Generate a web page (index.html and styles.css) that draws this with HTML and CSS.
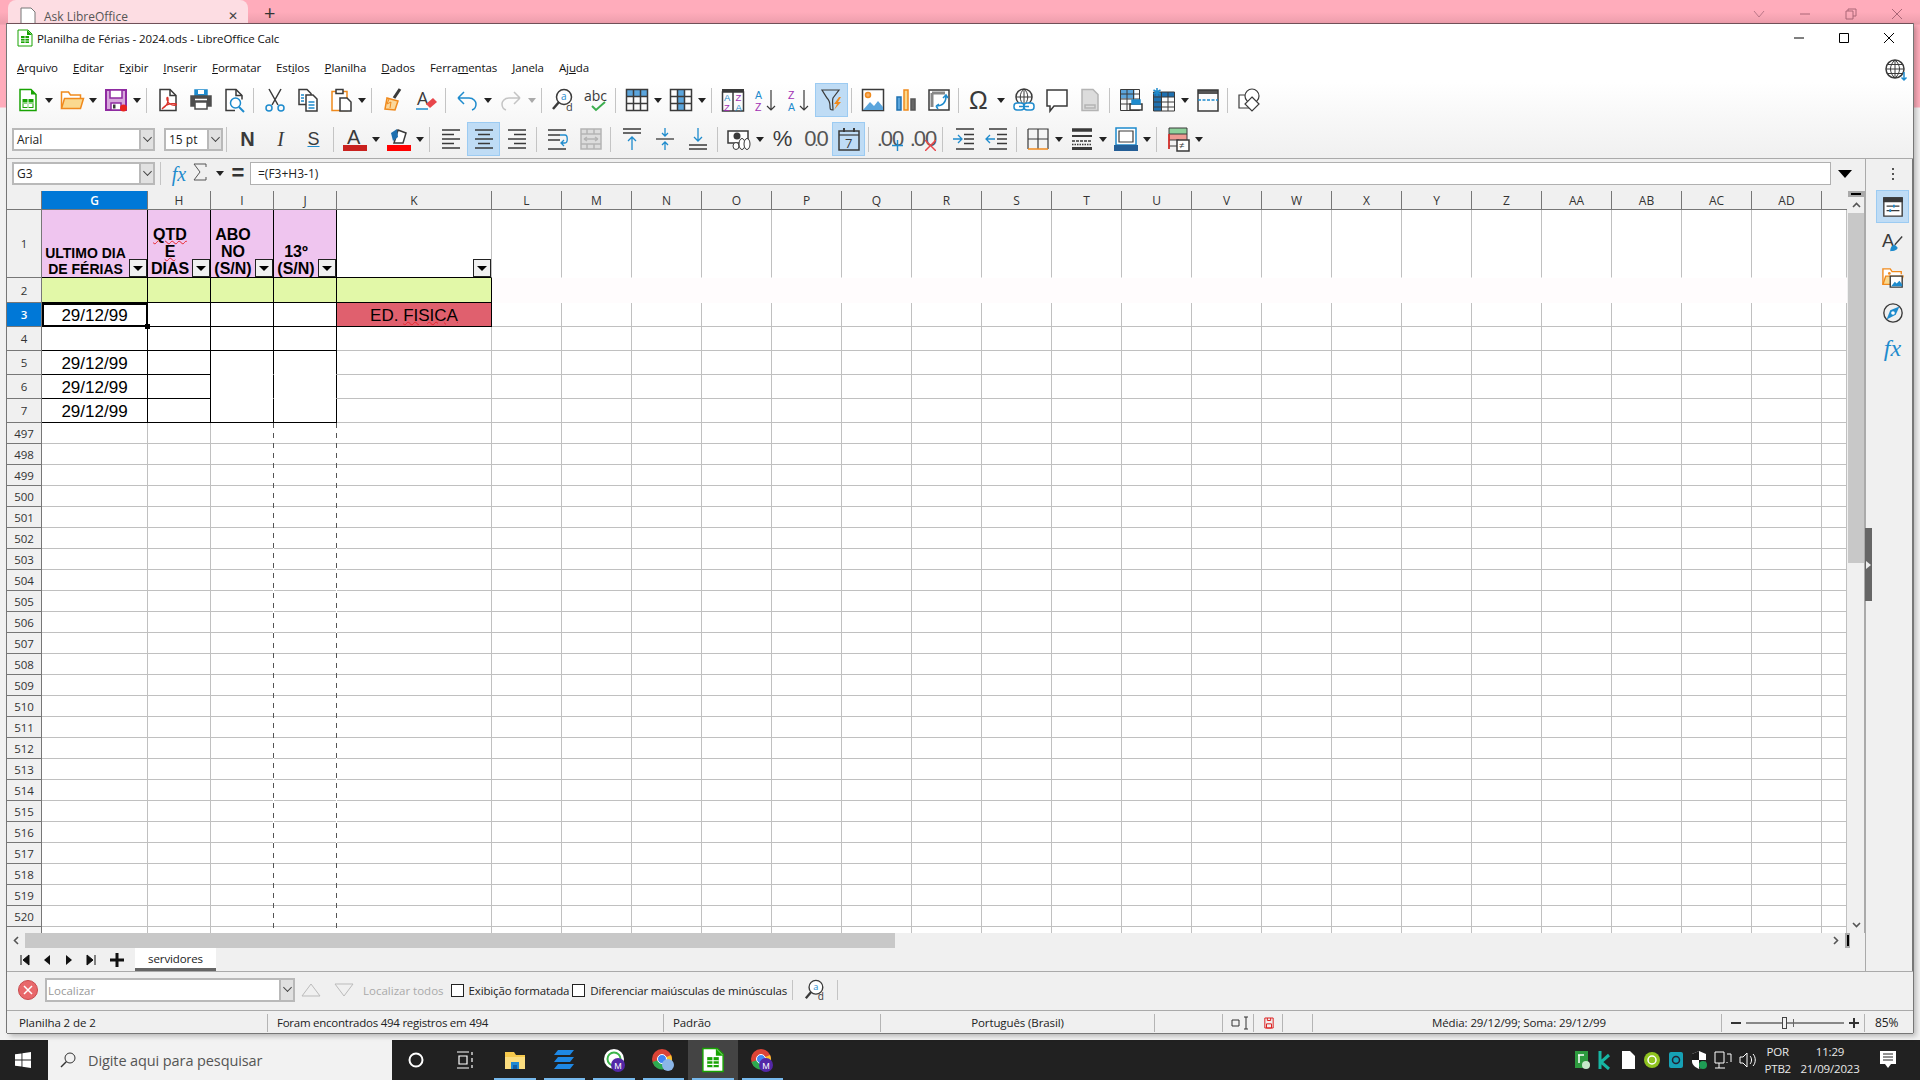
FILE: index.html
```html
<!DOCTYPE html>
<html lang="pt-BR">
<head>
    <meta charset="UTF-8">
    <title>Planilha de Férias - 2024.ods - LibreOffice Calc</title>
    <link rel="stylesheet" href="styles.css">
</head>
<body>
<div class="desktop">
    <div class="backdrop">
        <div class="browser-tab">
            <svg class="tab-doc" width="16" height="18" viewBox="0 0 16 18"><path d="M1 1h10l4 4v12H1z" fill="#fff" stroke="#777"/></svg>
            <span class="tab-title">Ask LibreOffice</span>
            <span class="tab-close">✕</span>
        </div>
        <span class="tab-plus">+</span>
        <div class="browser-controls">
            <svg width="12" height="12" viewBox="0 0 12 12"><path d="M1 3l5 6 5-6" fill="none" stroke="#b78"/></svg>
            <svg width="12" height="12" viewBox="0 0 12 12"><path d="M1 6h10" stroke="#a67"/></svg>
            <svg width="12" height="12" viewBox="0 0 12 12"><path d="M1 3h7v8H1zM3 3V1h8v7H8" fill="none" stroke="#a67"/></svg>
            <svg width="12" height="12" viewBox="0 0 12 12"><path d="M1 1l10 10M11 1L1 11" stroke="#a67"/></svg>
        </div>

        <div class="window">
            <div class="titlebar">
                <svg class="app-icon" width="16" height="18" viewBox="0 0 16 18"><path d="M1 1h10l4 4v12H1z" fill="#fff" stroke="#18a303"/><path d="M10 1l5 5h-5z" fill="#18a303"/><path d="M4 7h8v7H4z" fill="#18a303"/><path d="M4 9.5h8M4 12h8M8 7v7" stroke="#fff" stroke-width=".8"/></svg>
                <span class="title-text">Planilha de Férias - 2024.ods - LibreOffice Calc</span>
                <div class="win-controls">
                    <svg width="12" height="12" viewBox="0 0 12 12"><path d="M1 6h10" stroke="#000"/></svg>
                    <svg width="12" height="12" viewBox="0 0 12 12"><path d="M1.5 1.5h9v9h-9z" fill="none" stroke="#000"/></svg>
                    <svg width="12" height="12" viewBox="0 0 12 12"><path d="M1 1l10 10M11 1L1 11" stroke="#000"/></svg>
                </div>
            </div>

            <div class="toolbox">
                <div class="menubar">
                    <span class="menu"><u>A</u>rquivo</span>
                    <span class="menu"><u>E</u>ditar</span>
                    <span class="menu">E<u>x</u>ibir</span>
                    <span class="menu"><u>I</u>nserir</span>
                    <span class="menu"><u>F</u>ormatar</span>
                    <span class="menu">Est<u>i</u>los</span>
                    <span class="menu"><u>P</u>lanilha</span>
                    <span class="menu"><u>D</u>ados</span>
                    <span class="menu">Ferra<u>m</u>entas</span>
                    <span class="menu"><u>J</u>anela</span>
                    <span class="menu">Aj<u>u</u>da</span>
                    <svg class="ic menu-globe" viewBox="0 0 24 24"><circle cx="11" cy="11" r="9"/><path d="M2 11h18M3 6.5h16M3 15.5h16M11 2v18M11 2c-6 5-6 13 0 18M11 2c6 5 6 13 0 18" stroke-width="1"/><path d="M20 14v8M17.5 19.5l2.5 2.5 2.5-2.5" stroke="#1e8bcd"/></svg>
                </div>

                <div class="toolbar">
                    <button class="tool"><svg class="ic" viewBox="0 0 24 24"><path d="M4 1.5h11l5 5v16H4z" fill="#fff" stroke="#18a303"/><path d="M15 1.5l5 5h-5z" fill="#18a303" stroke="none"/><path d="M6.5 11h11v9h-11z" fill="#18a303" stroke="none"/><path d="M6.5 15h11M12 11v9" stroke="#fff" stroke-width="1"/><path d="M7.5 16h4v3h-4zM12.5 16h4v3h-4z" fill="#fff" stroke="none"/></svg></button>
                    <span class="drop"></span>
                    <button class="tool"><svg class="ic" viewBox="0 0 24 24"><path d="M1.500 20V4h7l2 3h10v4" fill="#fff" stroke="#f08a1d"/><path d="M1.500 20.500l3-10h19l-3 10z" fill="#fad98f" stroke="#f08a1d"/></svg></button>
                    <span class="drop"></span>
                    <button class="tool"><svg class="ic" viewBox="0 0 24 24"><path d="M2 2h20v20H2z" fill="#d7a7dc" stroke="#8f2ba1" stroke-width="2"/><path d="M6 2h12v8H6z" fill="#fff" stroke="#8f2ba1"/><path d="M7 15h10v7H7z" fill="#fff" stroke="#8f2ba1"/><path d="M9 16.500h2.500v4H9z" fill="#3a3a3a" stroke="none"/><circle cx="19.500" cy="20" r="3.500" fill="#e8251f" stroke="none"/></svg></button>
                    <span class="drop"></span>
                    <span class="sep"></span>
                    <button class="tool"><svg class="ic" viewBox="0 0 24 24"><path d="M4 1.500h10l6 6v15H4z" fill="#fff"/><path d="M14 1.500v6h6"/><path d="M6 21c4-2 7-7 6-11-1-2-2 1 0 4s6 4 8 3-3-2-7-1-5 3-7 5z" fill="none" stroke="#d9322b" stroke-width="1.300"/></svg></button>
                    <button class="tool"><svg class="ic" viewBox="0 0 24 24"><path d="M6 2h12v7H6z" fill="#1e8bcd" stroke="#1e8bcd"/><path d="M9 2h6v4H9z" fill="#fff" stroke="none"/><path d="M2 8h20v10H2z" fill="#4d4d4d" stroke="#4d4d4d"/><path d="M6 14h12v7H6z" fill="#fff" stroke="#4d4d4d"/><path d="M6 11.500h12" stroke="#fff" stroke-width="1.500"/></svg></button>
                    <button class="tool"><svg class="ic" viewBox="0 0 24 24"><path d="M13 22.500H4v-21h10l6 6v4" fill="#fff"/><path d="M14 1.500v6h6"/><circle cx="13.500" cy="15" r="5" stroke="#1e8bcd" fill="#fff"/><path d="M17 19l5 5" stroke="#1e8bcd" stroke-width="2"/></svg></button>
                    <span class="sep"></span>
                    <button class="tool"><svg class="ic" viewBox="0 0 24 24"><path d="M6 1l9 16M18 1L9 17" stroke="#3a3a3a"/><circle cx="6" cy="20" r="3" stroke="#1e8bcd"/><circle cx="18" cy="20" r="3" stroke="#1e8bcd"/></svg></button>
                    <button class="tool"><svg class="ic" viewBox="0 0 24 24"><path d="M3 1.500h8l4 4v11H3z" fill="#fff"/><path d="M10 7h7l4 4v12H10z" fill="#fff"/><path d="M12.500 14h6M12.500 17h6M12.500 20h6" stroke="#1e8bcd"/><path d="M5 7h3M5 10h3M5 13h3" stroke="#1e8bcd"/></svg></button>
                    <button class="tool"><svg class="ic" viewBox="0 0 24 24"><path d="M3 3.500h15v19H3z" fill="#fff" stroke="#f08a1d"/><path d="M7 1.500h7v4H7z" fill="#fff"/><path d="M11 10h7l4 4v9H11z" fill="#fff"/></svg></button>
                    <span class="drop"></span>
                    <span class="sep"></span>
                    <button class="tool"><svg class="ic" viewBox="0 0 24 24"><path d="M19 1l-6 9" stroke="#3a3a3a" stroke-width="3"/><path d="M6 10l11 3-3 9-10-1z" fill="#fbd79a" stroke="#f08a1d"/><path d="M8 11l-2 5 4-2-1 6" stroke="#f08a1d" stroke-width="1"/></svg></button>
                    <button class="tool"><svg class="ic" viewBox="0 0 24 24"><text x="3" y="17" font-size="18" fill="#3a3a3a" stroke="none">A</text><path d="M2 21h12" stroke="#1e8bcd"/><path d="M12 16l7-6 4 4-7 6z" fill="#e8464b" stroke="none"/></svg></button>
                    <span class="sep"></span>
                    <button class="tool"><svg class="ic" viewBox="0 0 24 24"><path d="M3 10l6-6M3 10l6 6M3 10h11c5 0 7 4 7 6s-1 5-4 6" stroke="#1e8bcd"/></svg></button>
                    <span class="drop"></span>
                    <button class="tool"><svg class="ic" viewBox="0 0 24 24"><path d="M21 10l-6-6M21 10l-6 6M21 10H10c-5 0-7 4-7 6s1 5 4 6" stroke="#c4c4c4"/></svg></button>
                    <span class="drop off"></span>
                    <span class="sep"></span>
                    <button class="tool"><svg class="ic" viewBox="0 0 24 24"><circle cx="13" cy="9" r="7.500" fill="#fff"/><path d="M8 14l-6 7" stroke-width="2.500"/><text x="10" y="12" font-size="10" fill="#1e8bcd" stroke="none">a</text><text x="15" y="23" font-size="11" fill="#3a3a3a" stroke="none">d</text></svg></button>
                    <button class="tool"><svg class="ic" viewBox="0 0 24 24"><text x="0" y="13" font-size="14" fill="#3a3a3a" stroke="none">abc</text><path d="M8 18l4 4 9-8" stroke="#3cae4f" stroke-width="2"/></svg></button>
                    <span class="sep"></span>
                    <button class="tool"><svg class="ic" viewBox="0 0 24 24"><path d="M1.500 1.500h21v7h-21z" fill="#5ba5dc" stroke="none"/><path d="M1.500 1.500h21v21h-21zM1.500 8.500h21M1.500 15.500h21M8.500 1.500v21M15.500 1.500v21"/></svg></button>
                    <span class="drop"></span>
                    <button class="tool"><svg class="ic" viewBox="0 0 24 24"><path d="M8.500 1.500h7v21h-7z" fill="#5ba5dc" stroke="none"/><path d="M1.500 1.500h21v21h-21zM1.500 8.500h21M1.500 15.500h21M8.500 1.500v21M15.500 1.500v21"/></svg></button>
                    <span class="drop"></span>
                    <span class="sep"></span>
                    <button class="tool"><svg class="ic" viewBox="0 0 24 24"><path d="M1 1h22v3H1z" fill="#3a3a3a" stroke="none"/><path d="M1.500 4h21v19h-21zM12 4v19"/><g font-size="9.500" stroke="none" font-family="Liberation Sans"><text x="3" y="13" fill="#1e8bcd">A</text><text x="3" y="22.500" fill="#a12fb3">Z</text><text x="14.500" y="13" fill="#a12fb3">Z</text><text x="14.500" y="22.500" fill="#1e8bcd">A</text></g></svg></button>
                    <button class="tool"><svg class="ic" viewBox="0 0 24 24"><g font-size="10.500" stroke="none" font-family="Liberation Sans"><text x="1" y="11" fill="#1e8bcd">A</text><text x="1" y="23" fill="#a12fb3">Z</text></g><path d="M17 2v20M13 18l4 4 4-4" stroke-width="1.200"/></svg></button>
                    <button class="tool"><svg class="ic" viewBox="0 0 24 24"><g font-size="10.500" stroke="none" font-family="Liberation Sans"><text x="1" y="11" fill="#a12fb3">Z</text><text x="1" y="23" fill="#1e8bcd">A</text></g><path d="M17 2v20M13 18l4 4 4-4" stroke-width="1.200"/></svg></button>
                    <button class="tool on"><svg class="ic" viewBox="0 0 24 24"><path d="M2 2h17l-6 8c-1 3 0 8 0 12-3 0-3-1-3-4 0-3-1-6-3-8z" stroke-width="1.200"/><path d="M19 9l-5 7h3l-3 6 7-8h-3l3-5z" fill="#f08a1d" stroke="none"/></svg></button>
                    <span class="sep"></span>
                    <button class="tool"><svg class="ic" viewBox="0 0 24 24"><path d="M1.500 1.500h21v21h-21z" fill="#fff"/><path d="M2 22l7-8 4 4 4-5 5 6v3z" fill="#5ba5dc" stroke="none"/><circle cx="7" cy="7" r="2.500" fill="#f6b26b" stroke="#f08a1d"/></svg></button>
                    <button class="tool"><svg class="ic" viewBox="0 0 24 24"><path d="M3 9h4v13H3z" fill="#5ba5dc" stroke="#1e70b0"/><path d="M10 2h4v20h-4z" fill="#fbd98c" stroke="#f08a1d"/><path d="M17 11h4v11h-4z" fill="#666" stroke="#555"/></svg></button>
                    <button class="tool"><svg class="ic" viewBox="0 0 24 24"><path d="M2 2h20v20H2z" fill="#fff"/><path d="M5 5h13M5 5v14" stroke="#888" stroke-width="3"/><path d="M9 18c6 0 10-3 10-10M16 10l3-3 2 3M9 18l3-2M9 18l2 3" stroke="#1e8bcd"/></svg></button>
                    <span class="sep"></span>
                    <button class="tool"><svg class="ic" viewBox="0 0 24 24"><text x="1" y="21" font-size="25" fill="#3a3a3a" stroke="none" font-family="Liberation Sans">Ω</text></svg></button>
                    <span class="drop"></span>
                    <button class="tool"><svg class="ic" viewBox="0 0 24 24"><circle cx="12" cy="9" r="8"/><path d="M4 9h16M12 1v16M12 1c-5 4-5 12 0 16M12 1c5 4 5 12 0 16" stroke-width="1"/><rect x="2" y="15" width="10" height="7" rx="3" fill="#fff" stroke="#1e8bcd"/><rect x="12" y="15" width="10" height="7" rx="3" fill="#fff" stroke="#1e8bcd"/><path d="M7 18.500h10" stroke="#1e8bcd"/></svg></button>
                    <button class="tool"><svg class="ic" viewBox="0 0 24 24"><path d="M2 2h20v16H9l-4 5v-5H2z" fill="#fff"/></svg></button>
                    <button class="tool"><svg class="ic" viewBox="0 0 24 24"><path d="M4 1.500h11l5 5v16H4z" fill="#dcdcdc" stroke="#b4b4b4"/><path d="M7 17h10v3H7z" stroke="#b4b4b4"/></svg></button>
                    <span class="sep"></span>
                    <button class="tool"><svg class="ic" viewBox="0 0 24 24"><path d="M1.500 1.500h14v9h-14z" fill="#5ba5dc" stroke="none"/><path d="M1.500 1.500h19v21h-19zM1.500 6h19M1.500 11h19M1.500 16h19M8 1.500v21M14.500 1.500v21" stroke-width="1"/><path d="M11 16h12v6H11z" fill="#fff"/><path d="M13 12h8v4h-8z" fill="#1e8bcd" stroke="#1e8bcd"/></svg></button>
                    <button class="tool"><svg class="ic" viewBox="0 0 24 24"><path d="M1.500 4h8v19h-8zM9.500 4h13v5h-13z" fill="#1e70b0" stroke="none"/><path d="M1.500 4h21v19h-21zM1.500 9h21M1.500 14h21M1.500 19h21M9.500 4v19M16 4v19" stroke-width="1"/><path d="M5 0v8M1.500 2l7 4M8.500 2l-7 4" stroke="#1e8bcd"/></svg></button>
                    <span class="drop"></span>
                    <button class="tool"><svg class="ic" viewBox="0 0 24 24"><path d="M2 2h20v4H2z" fill="#555" stroke="none"/><path d="M2 2h20v21H2z"/><path d="M2 12h20" stroke="#1e8bcd" stroke-dasharray="3 1.500"/></svg></button>
                    <span class="sep"></span>
                    <button class="tool"><svg class="ic" viewBox="0 0 24 24"><path d="M2 7h10v13H2z" fill="#fff" stroke-width="1.200"/><circle cx="15" cy="8" r="7" fill="#fff" stroke-width="1.200"/><path d="M15 9l7 7-7 7-7-7z" fill="#fff" stroke-width="1.200"/></svg></button>
                </div>

                <div class="toolbar second">
                    <div class="combo font-box"><span>Arial</span><i class="combo-btn"></i></div>
                    <div class="combo size-box"><span>15 pt</span><i class="combo-btn"></i></div>
                    <span class="sep"></span>
                    <button class="tool"><span class="fmt bold">N</span></button>
                    <button class="tool"><span class="fmt ital">I</span></button>
                    <button class="tool"><span class="fmt und">S</span></button>
                    <span class="sep"></span>
                    <button class="tool"><svg class="ic" viewBox="0 0 24 24"><text x="4" y="17" font-size="20" fill="#3a3a3a" stroke="none" font-family="Liberation Sans">A</text><path d="M0 18h24v6H0z" fill="#c9211e" stroke="none"/></svg></button>
                    <span class="drop"></span>
                    <button class="tool"><svg class="ic" viewBox="0 0 24 24"><path d="M11 3l8 3-3 10H7z" fill="#fff"/><path d="M4 6l6-4 1 8-5 4z" fill="#1e70b0" stroke="none"/><path d="M0 18h24v6H0z" fill="#f00" stroke="none"/></svg></button>
                    <span class="drop"></span>
                    <span class="sep"></span>
                    <button class="tool"><svg class="ic lines" viewBox="0 0 24 24"><path d="M3 3h18M3 7.500h12M3 12h18M3 16.500h12M3 21h18"/></svg></button>
                    <button class="tool on"><svg class="ic lines" viewBox="0 0 24 24"><path d="M3 3h18M6 7.500h12M3 12h18M6 16.500h12M3 21h18"/></svg></button>
                    <button class="tool"><svg class="ic lines" viewBox="0 0 24 24"><path d="M3 3h18M9 7.500h12M3 12h18M9 16.500h12M3 21h18"/></svg></button>
                    <span class="sep"></span>
                    <button class="tool"><svg class="ic lines" viewBox="0 0 24 24"><path d="M2 3h18M2 8h12M2 13h12M2 22h18"/><path d="M14 8h5c3 0 3 8 0 8h-3M18 13l-3 3 3 3" stroke="#1e8bcd" stroke-width="1.300"/></svg></button>
                    <button class="tool"><svg class="ic" viewBox="0 0 24 24"><path d="M2 2h20v20H2z" fill="#dcdcdc" stroke="#b4b4b4"/><path d="M2 7h20M2 17h20M8 2v5M15 2v5M8 17v5M15 17v5M5 12h14M5 12l3-2M5 12l3 2M19 12l-3-2M19 12l-3 2" stroke="#b4b4b4"/></svg></button>
                    <span class="sep"></span>
                    <button class="tool"><svg class="ic lines" viewBox="0 0 24 24"><path d="M3 2h18M3 6h18"/><path d="M12 23V10M8 14l4-4 4 4" stroke="#1e8bcd"/></svg></button>
                    <button class="tool"><svg class="ic lines" viewBox="0 0 24 24"><path d="M3 12h18"/><path d="M12 1v8M9 6l3 3 3-3M12 23v-8M9 18l3-3 3 3" stroke="#1e8bcd"/></svg></button>
                    <button class="tool"><svg class="ic lines" viewBox="0 0 24 24"><path d="M3 22h18M3 18h18"/><path d="M12 1v13M8 10l4 4 4-4" stroke="#1e8bcd"/></svg></button>
                    <span class="sep"></span>
                    <button class="tool"><svg class="ic" viewBox="0 0 24 24"><path d="M1 4h20v12H1z" fill="#fff"/><circle cx="10" cy="9" r="3.500" fill="#3a3a3a" stroke="none"/><g fill="#fff" stroke-width="1"><ellipse cx="9" cy="19" rx="3" ry="3.500"/><ellipse cx="15" cy="17" rx="3" ry="5.500"/><ellipse cx="20" cy="17" rx="3" ry="5.500"/></g></svg></button>
                    <span class="drop"></span>
                    <button class="tool"><span class="fmt pct">%</span></button>
                    <button class="tool"><span class="fmt num">0<small>.</small>0</span></button>
                    <button class="tool on"><svg class="ic" viewBox="0 0 24 24"><path d="M2 4h20v19H2z"/><path d="M2 8h20" stroke-width="1.200"/><path d="M7 1v4M17 1v4" stroke-width="2"/><text x="8" y="21" font-size="13" fill="#3a3a3a" stroke="none">7</text></svg></button>
                    <span class="sep"></span>
                    <button class="tool"><span class="fmt num">.0<span class="num-over">0</span></span><svg class="mark" viewBox="0 0 10 10"><path d="M5 0v10M0 5h10" stroke="#1e8bcd" stroke-width="1.300"/></svg></button>
                    <button class="tool"><span class="fmt num">.0<span class="num-over">0</span></span><svg class="mark" viewBox="0 0 10 10"><path d="M0 0l10 10M10 0L0 10" stroke="#e8464b" stroke-width="1.300"/></svg></button>
                    <span class="sep"></span>
                    <button class="tool"><svg class="ic lines" viewBox="0 0 24 24"><path d="M4 2h18M12 7.500h10M12 12h10M12 16.500h10M4 22h18"/><path d="M1 12h9M6 8l4 4-4 4" stroke="#1e8bcd"/></svg></button>
                    <button class="tool"><svg class="ic lines" viewBox="0 0 24 24"><path d="M4 2h18M12 7.500h10M12 12h10M12 16.500h10M4 22h18"/><path d="M10 12H1M5 8l-4 4 4 4" stroke="#1e8bcd"/></svg></button>
                    <span class="sep"></span>
                    <button class="tool"><svg class="ic" viewBox="0 0 24 24"><path d="M2 2h20v20M2 2v20M2 12h20M12 2v20" stroke-width="1.200"/><path d="M2 22h20" stroke="#f08a1d" stroke-width="1.500"/></svg></button>
                    <span class="drop"></span>
                    <button class="tool"><svg class="ic" viewBox="0 0 24 24"><path d="M2 3h20" stroke-width="3.500"/><path d="M2 9h20" stroke-width="2"/><path d="M2 14h20" stroke-dasharray="3 1"/><path d="M2 17.500h20" stroke-dasharray="1.500 1"/><path d="M2 21.500h20" stroke-width="3"/></svg></button>
                    <span class="drop"></span>
                    <button class="tool"><svg class="ic" viewBox="0 0 24 24"><path d="M2 1h20v17H2z" stroke="#1e8bcd" fill="#fff"/><path d="M5 4h14v11H5z" stroke-width="1.200"/><path d="M0 18h24v6H0z" fill="#245e96" stroke="none"/></svg></button>
                    <span class="drop"></span>
                    <span class="sep"></span>
                    <button class="tool"><svg class="ic" viewBox="0 0 24 24"><path d="M3 1h18v6H3z" fill="#8ed19b" stroke="none"/><path d="M3 7h18v6H3z" fill="#f09a93" stroke="none"/><path d="M3 1h18M3 1v21M21 1v12M3 7h18M3 13h10M3 19h8" stroke-width="1"/><path d="M3 7v15" stroke="#e8251f"/><path d="M11 13h12v11H11z" fill="#fff"/><text x="13" y="22" font-size="10" fill="#3a3a3a" stroke="none">≠</text></svg></button>
                    <span class="drop"></span>
                </div>
            </div>

            <div class="workspace">
                <div class="main-col">
                    <div class="formula-row">
                        <div class="combo name-box"><span>G3</span><i class="combo-btn"></i></div>
                        <span class="sep"></span>
                        <span class="fx">fx</span>
                        <svg class="sigma" viewBox="0 0 14 18"><path d="M13 4V1H1l6 8-6 8h12v-3" fill="none" stroke="#555"/></svg>
                        <span class="drop"></span>
                        <span class="equal">=</span>
                        <div class="formula-input">=(F3+H3-1)</div>
                        <span class="formula-more"></span>
                    </div>

                    <div class="sheet-row">
                        <div class="sheet">
                            <table class="grid" id="grid"></table>
                            <span class="page-break pb-i"></span>
                            <span class="page-break pb-j"></span>
                        </div>
                        <div class="vscroll">
                            <span class="split-v"></span>
                            <span class="sb-btn"><svg width="9" height="6" viewBox="0 0 9 6"><path d="M1 5l3.500-3.500L8 5" fill="none" stroke="#555" stroke-width="1.600"/></svg></span>
                            <span class="thumb-v"></span>
                            <span class="track-v"></span>
                            <span class="sb-btn"><svg width="9" height="6" viewBox="0 0 9 6"><path d="M1 1l3.500 3.500L8 1" fill="none" stroke="#555" stroke-width="1.600"/></svg></span>
                        </div>
                    </div>

                    <div class="hscroll">
                        <span class="sb-btn-h"><svg width="6" height="9" viewBox="0 0 6 9"><path d="M5 1L1.500 4.500 5 8" fill="none" stroke="#555" stroke-width="1.600"/></svg></span>
                        <span class="thumb-h"></span>
                        <span class="track-h"></span>
                        <span class="sb-btn-h"><svg width="6" height="9" viewBox="0 0 6 9"><path d="M1 1l3.500 3.500L1 8" fill="none" stroke="#555" stroke-width="1.600"/></svg></span>
                        <span class="split-h"></span>
                    </div>

                    <div class="tabbar">
                        <svg class="nav-ic" viewBox="0 0 12 12"><path d="M2 1v10M10 1v10L4 6z" stroke="#111" fill="#111"/></svg>
                        <svg class="nav-ic" viewBox="0 0 12 12"><path d="M9 1v10L3 6z" fill="#111"/></svg>
                        <svg class="nav-ic" viewBox="0 0 12 12"><path d="M3 1v10l6-5z" fill="#111"/></svg>
                        <svg class="nav-ic" viewBox="0 0 12 12"><path d="M10 1v10M2 1v10l6-5z" stroke="#111" fill="#111"/></svg>
                        <svg class="nav-ic plus" viewBox="0 0 14 14"><path d="M7 0v14M0 7h14" stroke="#111" stroke-width="3"/></svg>
                        <span class="sheet-tab">servidores</span>
                    </div>
                </div>

                <div class="sidebar">
                    <span class="side-dots"></span>
                    <button class="side-btn on"><svg class="ic side-ic" viewBox="0 0 24 24"><path d="M2 2h20v20H2z" fill="#fff"/><path d="M2 2h20v4H2z" fill="#3a3a3a"/><path d="M5 11h14M5 16h14"/><path d="M13 9.500v3M9 14.500v3" stroke="#1e8bcd" stroke-width="2"/></svg></button>
                    <button class="side-btn"><svg class="ic side-ic" viewBox="0 0 24 24"><text x="0" y="17" font-size="20" fill="#3a3a3a" stroke="none" font-family="Liberation Sans">A</text><path d="M22 6l-8 9" stroke="#3a3a3a" stroke-width="1.500"/><path d="M9 22c0-4 2-7 5-7l3 3c0 3-4 4-8 4z" fill="#1e8bcd" stroke="none"/></svg></button>
                    <button class="side-btn"><svg class="ic side-ic" viewBox="0 0 24 24"><path d="M1 19V2h8l2 3h10v3" fill="#fff" stroke="#f08a1d"/><path d="M1 19l3-9h19l-3 9z" fill="#fad98f" stroke="#f08a1d"/><path d="M9 10h13v12H9z" fill="#fff" stroke="#3a3a3a"/><path d="M10 21l4-5 2 2 3-3 3 4v2z" fill="#1e8bcd" stroke="none"/><circle cx="8" cy="7" r="1.500" fill="#f08a1d" stroke="none"/></svg></button>
                    <button class="side-btn"><svg class="ic side-ic" viewBox="0 0 24 24"><circle cx="12" cy="12" r="10"/><path d="M19 5l-4 9-10 5 4-10z" fill="#1e8bcd" stroke="none"/><circle cx="12" cy="12" r="2" fill="#fff" stroke="none"/></svg></button>
                    <button class="side-btn"><span class="side-fx">fx</span></button>
                    <span class="side-grip"><svg width="5" height="8" viewBox="0 0 5 8"><path d="M0 0l5 4-5 4z" fill="#eee"/></svg></span>
                </div>
            </div>

            <div class="findbar">
                <svg class="find-close" viewBox="0 0 20 20"><circle cx="10" cy="10" r="9.500" fill="#e8686b" stroke="#c84a4d"/><path d="M6 6l8 8M14 6l-8 8" stroke="#fff" stroke-width="1.500"/></svg>
                <div class="combo find-box"><span>Localizar</span><i class="combo-btn"></i></div>
                <svg class="find-arrow up" viewBox="0 0 20 14"><path d="M1 13L10 1l9 12z" fill="none" stroke="#bbb"/></svg>
                <svg class="find-arrow down" viewBox="0 0 20 14"><path d="M1 1l9 12 9-12z" fill="none" stroke="#bbb"/></svg>
                <span class="find-all">Localizar todos</span>
                <span class="check"></span><span class="check-label one">Exibição formatada</span>
                <span class="check"></span><span class="check-label">Diferenciar maiúsculas de minúsculas</span>
                <span class="find-sep"></span>
                <svg class="ic find-ic" viewBox="0 0 24 24"><circle cx="13" cy="9" r="7.500" fill="#fff"/><path d="M8 14l-6 7" stroke-width="2.500"/><text x="10" y="12" font-size="10" fill="#1e8bcd" stroke="none">a</text><text x="15" y="23" font-size="11" fill="#3a3a3a" stroke="none">d</text></svg>
                <span class="find-sep"></span>
            </div>

            <div class="statusbar">
                <span class="st st-sheet">Planilha 2 de 2</span>
                <span class="st st-found">Foram encontrados 494 registros em 494</span>
                <span class="st st-style">Padrão</span>
                <span class="st st-lang">Português (Brasil)</span>
                <span class="st st-blank"></span>
                <span class="st st-ins"><svg width="20" height="14" viewBox="0 0 20 14"><path d="M2 4h7v6H2z" fill="none" stroke="#333"/><path d="M14 1h4M16 1v12M14 13h4" stroke="#333"/></svg></span>
                <span class="st st-save"><svg width="10" height="14" viewBox="0 0 12 14"><path d="M1 1h10v12H1zM4 1v3h4V1M3 8h6v5H3z" fill="none" stroke="#d22" stroke-width="1.200"/></svg></span>
                <span class="st st-sign"></span>
                <span class="st st-sum">Média: 29/12/99; Soma: 29/12/99</span>
                <span class="st st-zoom">
                    <svg width="10" height="10" viewBox="0 0 10 10"><path d="M0 5h10" stroke="#333" stroke-width="2"/></svg>
                    <span class="zoom-track"><i class="zoom-tick"></i><i class="zoom-thumb"></i></span>
                    <svg width="10" height="10" viewBox="0 0 10 10"><path d="M0 5h10M5 0v10" stroke="#333" stroke-width="2"/></svg>
                </span>
                <span class="st st-pct">85%</span>
            </div>
        </div>
    </div>

    <div class="taskbar">
        <svg class="start" width="16" height="16" viewBox="0 0 16 16"><path d="M0 2.300l6.500-.9v6.200H0zM7.400 1.300L16 0v7.600H7.400zM0 8.400h6.500v6.200L0 13.700zM7.400 8.400H16V16l-8.600-1.300z" fill="#fff"/></svg>
        <div class="search">
            <svg width="16" height="16" viewBox="0 0 16 16"><circle cx="10" cy="6" r="5" fill="none" stroke="#333"/><path d="M6.500 9.500L1 15" stroke="#333" stroke-width="1.400"/></svg>
            <span>Digite aqui para pesquisar</span>
        </div>
        <div class="task-icons">
            <span class="task"><svg width="16" height="16" viewBox="0 0 16 16"><circle cx="8" cy="8" r="6.500" fill="none" stroke="#fff" stroke-width="2"/></svg></span>
            <span class="task"><svg width="18" height="18" viewBox="0 0 18 18"><path d="M1 1h12M1 17h12M3 5h8v8H3zM16 1v3M16 7v4M16 14v3" fill="none" stroke="#fff" stroke-width="1.200"/></svg></span>
            <span class="task open"><svg width="24" height="24" viewBox="0 0 24 24"><path d="M2 4h9l2 3h9v14H2z" fill="#f6c94c"/><path d="M2 9h20v12H2z" fill="#fbdd7f"/><path d="M8 14h8v7h-2v-4h-4v4H8z" fill="#1e88d2"/><path d="M10 17h4v4h-4z" fill="#0f5ea8"/></svg></span>
            <span class="task open"><svg width="24" height="24" viewBox="0 0 24 24"><path d="M6 2h16l-4 5H2zM6 9h16l-4 5H2zM6 16h16l-4 5H2z" fill="#1e88e5"/></svg></span>
            <span class="task open"><svg width="24" height="24" viewBox="0 0 24 24"><circle cx="12" cy="11" r="10" fill="#fff"/><circle cx="12" cy="11" r="6.500" fill="none" stroke="#3cb54a" stroke-width="2"/><circle cx="16" cy="17" r="7" fill="#5327a6"/><text x="16" y="20.500" font-size="9" fill="#fff" text-anchor="middle" font-family="Liberation Sans">M</text></svg></span>
            <span class="task open"><svg width="24" height="24" viewBox="0 0 24 24"><circle cx="11" cy="11" r="10" fill="#db4437"/><path d="M11 11L1.500 14A10 10 0 0 0 14 21z" fill="#2da94f"/><path d="M11 11l3 10a10 10 0 0 0 6-14z" fill="#fbc02d"/><circle cx="11" cy="11" r="4.500" fill="#4285f4" stroke="#fff"/><circle cx="17" cy="17" r="6" fill="#8bb6e8"/></svg></span>
            <span class="task active"><svg width="24" height="26" viewBox="0 0 16 18"><path d="M1 1h10l4 4v12H1z" fill="#fff" stroke="#18a303"/><path d="M10 1l5 5h-5z" fill="#18a303"/><path d="M4 7h8v7H4z" fill="#18a303"/><path d="M4 9.500h8M4 12h8M8 7v7" stroke="#fff" stroke-width=".8"/></svg></span>
            <span class="task open"><svg width="24" height="24" viewBox="0 0 24 24"><circle cx="11" cy="11" r="10" fill="#db4437"/><path d="M11 11L1.500 14A10 10 0 0 0 14 21z" fill="#2da94f"/><path d="M11 11l3 10a10 10 0 0 0 6-14z" fill="#fbc02d"/><circle cx="11" cy="11" r="4.500" fill="#4285f4" stroke="#fff"/><circle cx="16" cy="17" r="7" fill="#5327a6"/><text x="16" y="20.500" font-size="9" fill="#fff" text-anchor="middle" font-family="Liberation Sans">M</text></svg></span>
        </div>
        <div class="tray">
            <svg width="16" height="20" viewBox="0 0 16 20"><path d="M1 1h13v17H1z" fill="#2e9b3f"/><path d="M4 5h6M5 5v8" stroke="#fff" stroke-width="1.500"/><circle cx="12" cy="15" r="4" fill="#c7e8c9"/></svg>
            <svg width="16" height="20" viewBox="0 0 16 20"><path d="M3 1v18M12 5l-8 7 8 7" fill="none" stroke="#17b6a3" stroke-width="3"/></svg>
            <svg width="16" height="20" viewBox="0 0 16 20"><path d="M2 1h8l5 5v13H2z" fill="#fff"/></svg>
            <svg width="18" height="18" viewBox="0 0 18 18"><circle cx="9" cy="9" r="8" fill="#8fc31f"/><circle cx="9" cy="9" r="4" fill="none" stroke="#fff" stroke-width="1.500"/></svg>
            <svg width="16" height="20" viewBox="0 0 16 20"><rect x="1" y="2" width="14" height="16" rx="2" fill="#16a1b5"/><circle cx="8" cy="10" r="3.500" fill="none" stroke="#223" stroke-width="1.500"/></svg>
            <svg width="16" height="20" viewBox="0 0 16 20"><path d="M8 1l7 3v7c0 4-3 6-7 8-4-2-7-4-7-8V4z" fill="#fff"/><path d="M8 1v9H1V4zM8 10h7c0 4-3 7-7 9z" fill="#1c1c1c"/><circle cx="12" cy="15" r="4" fill="#1f9d55"/></svg>
            <svg width="18" height="20" viewBox="0 0 18 20"><path d="M1 2h9v11H1zM13 4h4v8M5 13v5M1 18h10M13 13v-1" fill="none" stroke="#fff"/></svg>
            <svg width="18" height="18" viewBox="0 0 18 18"><path d="M1 6h3l4-4v14l-4-4H1zM11 5c2 2 2 6 0 8M14 3c3 3 3 9 0 12" fill="none" stroke="#fff"/></svg>
            <div class="tray-lang"><span>POR</span><span>PTB2</span></div>
            <div class="tray-clock"><span>11:29</span><span>21/09/2023</span></div>
            <svg class="notify" width="16" height="20" viewBox="0 0 16 20"><path d="M0 1h16v13h-5l-3 4-3-4H0z" fill="#fff"/><path d="M3 4h10M3 7h10M3 10h10" stroke="#222"/></svg>
        </div>
    </div>
</div>
<script src="sheet.js"></script>
</body>
</html>
```

FILE: styles.css
```css
* {
    box-sizing: border-box;
}
body {
    margin: 0;
    font-family: "Open Sans", "Noto Sans", sans-serif;
    font-size: 11.5px;
    color: #222;
}
button {
    padding: 0;
    border: 1px solid transparent;
    background: none;
    font: inherit;
    color: inherit;
}
.desktop {
    width: 1920px;
    height: 1080px;
    display: flex;
    flex-direction: column;
    overflow: hidden;
}
.backdrop {
    position: relative;
    height: 1040px;
    padding: 23px 0 0 7px;
    background: linear-gradient(#ffacbb 0, #ffacbb 12px, #ec9dab 24px, #ffacbb 25px, #ffacbb 107px, #f2f2f2 108px);
}
.browser-tab {
    position: absolute;
    left: 8px;
    top: 0;
    width: 240px;
    height: 30px;
    padding-left: 12px;
    display: flex;
    background: #fddde3;
    border-radius: 8px 8px 0 0;
    font-size: 12px;
    color: #555;
}
.tab-doc {
    margin-top: 7px;
}
.tab-title {
    margin: 8px 0 0 8px;
}
.tab-close {
    margin: 7px 0 0 auto;
    padding-right: 10px;
    color: #444;
}
.tab-plus {
    position: absolute;
    left: 264px;
    top: 3px;
    font-size: 20px;
    line-height: 20px;
    color: #333;
}
.browser-controls {
    position: absolute;
    right: 17px;
    top: 8px;
    display: flex;
    gap: 34px;
}

/* window */
.window {
    width: 1906px;
    height: 1010px;
    display: flex;
    flex-direction: column;
    background: #f0f0f0;
    border-top: 1px solid #705058;
    box-shadow: 1px 0 0 #777, -1px 0 0 #777, 0 1px 0 #777, 3px 3px 5px rgba(0, 0, 0, 0.25);
    position: relative;
}
.titlebar {
    height: 28px;
    display: flex;
    align-items: center;
    padding-left: 10px;
    background: #fff;
    flex-shrink: 0;
}
.app-icon {
    margin-right: 4px;
}
.title-text {
    font-size: 11.5px;
    letter-spacing: -0.07px;
    color: #111;
}
.win-controls {
    margin-left: auto;
    display: flex;
    gap: 33px;
    padding-right: 18px;
}
.toolbox {
    height: 107px;
    flex-shrink: 0;
    background: linear-gradient(#fff 0, #fff 30px, #f0f0f0 100%);
    border-bottom: 1px solid #aaa;
}
.menubar {
    height: 31px;
    display: flex;
    align-items: center;
    padding-left: 10px;
    gap: 15px;
    font-size: 11.5px;
    letter-spacing: -0.1px;
    color: #111;
    position: relative;
}
.menu-globe {
    position: absolute;
    right: 5px;
    top: 6px;
    width: 18px;
    height: 18px;
}
.toolbar {
    height: 34px;
    padding-left: 4px;
    display: flex;
    align-items: center;
}
.second {
    margin-top: 5px;
    padding-left: 5px;
}
.tool {
    width: 33px;
    height: 34px;
    flex-shrink: 0;
    display: flex;
    align-items: center;
    justify-content: center;
    position: relative;
}
.tool.on, .side-btn.on {
    background: #bfdcf5;
    border-color: #9ccbf2;
}
.ic {
    width: 24px;
    height: 24px;
    fill: none;
    stroke: #3a3a3a;
    stroke-width: 1.5;
    font-family: "Open Sans", sans-serif;
    overflow: visible;
}
.drop {
    width: 11px;
    height: 16px;
    flex-shrink: 0;
    position: relative;
}
.drop::after {
    content: "";
    position: absolute;
    left: 1px;
    top: 6px;
    border: 4px solid transparent;
    border-top: 5px solid #222;
    border-bottom: 0;
}
.drop.off::after {
    border-top-color: #aaa;
}
.sep {
    width: 8px;
    height: 25px;
    flex-shrink: 0;
    position: relative;
}
.sep::after {
    content: "";
    position: absolute;
    left: 3px;
    top: 0;
    width: 1px;
    height: 100%;
    background: #c4c4c4;
}
.combo {
    height: 23px;
    display: flex;
    align-items: center;
    padding-left: 3px;
    background: #fff;
    border: 2px solid #b9b9b9;
    border-right: 0;
    font-size: 12px;
    color: #222;
    position: relative;
    flex-shrink: 0;
}
.combo-btn {
    position: absolute;
    right: 0;
    top: -2px;
    bottom: -2px;
    width: 16px;
    background: #e1e1e1;
    border: 2px solid #b9b9b9;
}
.combo-btn::after {
    content: "";
    position: absolute;
    left: 3px;
    top: 4px;
    width: 6px;
    height: 6px;
    border-right: 1px solid #444;
    border-bottom: 1px solid #444;
    transform: rotate(45deg) scale(0.9);
}
.font-box {
    width: 143px;
}
.size-box {
    width: 59px;
    margin-left: 9px;
}
.fmt {
    font-family: "Liberation Sans", sans-serif;
    color: #3a3a3a;
}
.bold {
    font-size: 20px;
    font-weight: bold;
}
.ital {
    font-family: "Liberation Serif", serif;
    font-size: 20px;
    font-style: italic;
}
.und {
    font-size: 18px;
    text-decoration: underline;
    text-decoration-color: #1e8bcd;
}
.pct {
    font-size: 22px;
}
.num {
    font-size: 22px;
    letter-spacing: -2px;
    color: #555;
}
.num small {
    font-size: 14px;
}
.num-over {
    margin-left: 1px;
}
.mark {
    position: absolute;
    right: 2px;
    bottom: 4px;
    width: 11px;
    height: 11px;
}
.lines {
    stroke-width: 1.3;
}

/* formula bar + sheet */
.workspace {
    display: flex;
    height: 813px;
    flex-shrink: 0;
    border-bottom: 1px solid #aaa;
}
.main-col {
    width: 1858px;
    display: flex;
    flex-direction: column;
}
.formula-row {
    height: 32px;
    padding: 3px 0 0 5px;
    display: flex;
    align-items: flex-start;
}
.name-box {
    width: 143px;
}
.formula-row .sep {
    height: 23px;
    margin-left: 2px;
}
.fx {
    width: 28px;
    text-align: center;
    font-family: "Liberation Serif", serif;
    font-style: italic;
    font-size: 20px;
    line-height: 25px;
    color: #1e8bcd;
}
.sigma {
    width: 14px;
    height: 18px;
    margin: 1px 8px 0 0;
    flex-shrink: 0;
}
.formula-row .drop {
    margin-top: 3px;
}
.equal {
    width: 24px;
    font-size: 22px;
    font-weight: bold;
    line-height: 22px;
    text-align: center;
    color: #333;
    font-family: "Liberation Sans", sans-serif;
}
.formula-input {
    width: 1581px;
    height: 23px;
    line-height: 22px;
    padding-left: 7px;
    background: #fff;
    border: 1px solid #b0b0b0;
    font-size: 12px;
    flex-shrink: 0;
}
.formula-more {
    margin: 8px 0 0 7px;
    border: 7px solid transparent;
    border-top: 8px solid #000;
    border-bottom: 0;
}
.sheet-row {
    height: 742px;
    display: flex;
}
.sheet {
    width: 1840px;
    height: 742px;
    overflow: hidden;
    position: relative;
    background: #fff;
}
.grid {
    border-collapse: separate;
    border-spacing: 0;
    table-layout: fixed;
    width: 1840px;
}
.grid th {
    padding: 0;
    height: 19px;
    background: #f0f0f0;
    border-right: 1px solid #777;
    border-bottom: 1px solid #777;
    font-weight: normal;
    font-size: 12px;
    color: #333;
}
.grid th.blank-head {
    border-right: 0;
}
.grid th.active {
    background: #0078d7;
    color: #fff;
    font-weight: 600;
}
.grid td {
    padding: 2px 0 0;
    background: #fff;
    border-right: 1px solid #c0c0c0;
    border-bottom: 1px solid #c0c0c0;
    font-family: "Liberation Sans", sans-serif;
    font-size: 17px;
    line-height: 20px;
    text-align: center;
    position: relative;
    color: #000;
}
.grid tr.tall td {
    vertical-align: bottom;
}
.grid th.row-head {
    font-size: 11.5px;
}
.grid td.br {
    border-right-color: #000;
}
.grid td.bb {
    border-bottom-color: #000;
}
.grid td.nb {
    border-bottom-color: #fff;
}
.grid td.head {
    background: #efc5ef;
    font-weight: bold;
    font-size: 16px;
    line-height: 17px;
    padding: 0 18px 0 0;
}
.grid td.small-head {
    font-size: 14px;
    line-height: 16px;
}
.grid td.lime {
    background: #e2f8a8;
}
.grid td.red {
    background: #e0606e;
}
.grid td.no-line {
    border-bottom-color: #fff;
}
.grid td.no-grid {
    background: #fffcfd;
    border-right-color: #fffcfd;
    border-bottom-color: #fffcfd;
}
.grid td.sel {
    outline: 2px solid #000;
    outline-offset: -2px;
}
.handle {
    position: absolute;
    right: -3px;
    bottom: -3px;
    width: 5px;
    height: 5px;
    background: #000;
    z-index: 2;
}
.spell {
    text-decoration: underline wavy #e8232a 1px;
    text-underline-offset: 0;
}
.filter {
    position: absolute;
    right: 0;
    bottom: 0;
    width: 18px;
    height: 18px;
    background: #f0f0f0;
    border: 1px solid #222;
}
.filter::after {
    content: "";
    position: absolute;
    left: 3px;
    top: 6px;
    border: 5px solid transparent;
    border-top: 5px solid #000;
    border-bottom: 0;
}
.page-break {
    position: absolute;
    top: 232px;
    bottom: 0;
    width: 1px;
    background: repeating-linear-gradient(#555 0, #555 5px, #fff 5px, #fff 10px);
}
.pb-i {
    left: 266px;
}
.pb-j {
    left: 329px;
}
.vscroll {
    width: 18px;
    padding-left: 1px;
    display: flex;
    flex-direction: column;
    border-right: 1px solid #aaa;
}
.split-v {
    height: 6px;
    background: #aaa;
    position: relative;
    flex-shrink: 0;
}
.split-v::after {
    content: "";
    position: absolute;
    left: 3px;
    right: 3px;
    top: 2px;
    height: 2px;
    background: #000;
}
.sb-btn {
    height: 16px;
    flex-shrink: 0;
    display: flex;
    align-items: center;
    justify-content: center;
    background: #f0f0f0;
}
.thumb-v {
    height: 350px;
    flex-shrink: 0;
    background: #c8c8c8;
}
.track-v {
    flex-grow: 1;
    background: #f0f0f0;
}
.hscroll {
    height: 15px;
    display: flex;
    align-items: stretch;
    flex-shrink: 0;
}
.sb-btn-h {
    width: 18px;
    flex-shrink: 0;
    display: flex;
    align-items: center;
    justify-content: center;
}
.thumb-h {
    width: 870px;
    background: #c8c8c8;
}
.track-h {
    flex-grow: 1;
}
.split-h {
    width: 5px;
    margin-right: 15px;
    background: #aaa;
    position: relative;
}
.split-h::after {
    content: "";
    position: absolute;
    left: 1.500px;
    top: 2px;
    bottom: 2px;
    width: 2px;
    background: #000;
}
.tabbar {
    height: 23px;
    display: flex;
    align-items: flex-start;
    padding-left: 12px;
    gap: 10px;
    flex-shrink: 0;
}
.nav-ic {
    width: 12px;
    height: 12px;
    margin-top: 6px;
    flex-shrink: 0;
}
.nav-ic.plus {
    width: 14px;
    height: 14px;
    margin: 5px 0 0 3px;
}
.sheet-tab {
    width: 81px;
    height: 23px;
    margin-left: 1px;
    line-height: 22px;
    text-align: center;
    background: #fff;
    border-bottom: 3px solid #666;
    font-size: 11.5px;
    letter-spacing: -0.1px;
}

/* sidebar */
.sidebar {
    width: 48px;
    border-left: 1px solid #aaa;
    border-right: 1px solid #777;
    padding: 31px 0 0 10px;
    display: flex;
    flex-direction: column;
    align-items: flex-start;
    position: relative;
}
.side-dots {
    position: absolute;
    left: 26px;
    top: 9px;
    width: 2px;
    height: 2px;
    background: #555;
    box-shadow: 0 5px 0 #555, 0 10px 0 #555;
}
.side-btn {
    width: 33px;
    height: 33px;
    margin-bottom: 2.500px;
    display: flex;
    align-items: center;
    justify-content: center;
}
.side-ic {
    width: 22px;
    height: 22px;
}
.side-fx {
    font-family: "Liberation Serif", serif;
    font-style: italic;
    font-size: 24px;
    color: #1e8bcd;
}
.side-grip {
    position: absolute;
    left: -1px;
    top: 369px;
    width: 7px;
    height: 73px;
    background: #666;
    display: flex;
    align-items: center;
    padding-left: 1px;
}

/* find + status */
.findbar {
    height: 39px;
    padding: 0 0 2px 11px;
    display: flex;
    align-items: center;
    border-bottom: 1px solid #aaa;
    flex-shrink: 0;
}
.find-close {
    width: 20px;
    height: 20px;
    margin-right: 7px;
}
.find-box {
    width: 250px;
    padding-left: 1px;
    color: #999;
    font-size: 11.5px;
    height: 24px;
}
.find-arrow {
    width: 20px;
    height: 14px;
}
.find-arrow.up {
    margin-left: 6px;
}
.find-arrow.down {
    margin-left: 13px;
}
.find-all {
    margin: 0 7px 0 9px;
    color: #aaa;
    white-space: nowrap;
}
.check {
    width: 13px;
    height: 13px;
    background: #fff;
    border: 1px solid #222;
    flex-shrink: 0;
}
.check-label {
    margin-left: 5px;
    white-space: nowrap;
    letter-spacing: -0.15px;
}
.check-label.one {
    margin-right: 3px;
}
.find-sep {
    width: 1px;
    height: 20px;
    margin: 0 5px;
    background: #c4c4c4;
}
.find-ic {
    width: 22px;
    height: 22px;
    margin: 0 6px;
}
.statusbar {
    height: 22px;
    padding-top: 1px;
    display: flex;
    align-items: center;
    flex-shrink: 0;
    font-size: 11.5px;
    letter-spacing: -0.1px;
    white-space: nowrap;
}
.st {
    height: 18px;
    line-height: 18px;
    padding-left: 9px;
    border-right: 1px solid #b4b4b4;
    flex-shrink: 0;
    display: flex;
    align-items: center;
}
.st-sheet {
    width: 261px;
    padding-left: 12px;
}
.st-found {
    width: 396px;
    letter-spacing: -0.25px;
}
.st-style {
    width: 217px;
}
.st-lang {
    width: 274px;
    justify-content: center;
    padding: 0;
}
.st-blank {
    width: 68px;
}
.st-ins {
    width: 31px;
    padding-left: 7px;
}
.st-save {
    width: 29px;
    padding-left: 10px;
}
.st-sign {
    width: 30px;
}
.st-sum {
    width: 409px;
    justify-content: center;
    padding: 0 0 0 4px;
}
.st-zoom {
    width: 143px;
    padding-left: 9px;
    gap: 5px;
}
.zoom-track {
    width: 98px;
    height: 2px;
    background: #888;
    position: relative;
}
.zoom-thumb {
    position: absolute;
    left: 36px;
    top: -5px;
    width: 5px;
    height: 12px;
    background: #f0f0f0;
    border: 1px solid #444;
}
.zoom-tick {
    position: absolute;
    left: 47px;
    top: -3px;
    width: 1px;
    height: 8px;
    background: #666;
}
.st-pct {
    border-right: 0;
    padding-left: 10px;
    font-size: 12px;
}

/* taskbar */
.taskbar {
    height: 40px;
    display: flex;
    align-items: center;
    background: #212121;
    color: #e8e8e8;
    flex-shrink: 0;
}
.start {
    margin: 0 17px 0 15px;
}
.search {
    width: 344px;
    height: 40px;
    padding-left: 12px;
    display: flex;
    align-items: center;
    gap: 12px;
    background: #f2f2f2;
    color: #555;
    font-size: 14.500px;
    letter-spacing: -0.1px;
}
.task-icons {
    display: flex;
    margin-left: -1px;
}
.task {
    width: 49.500px;
    height: 40px;
    display: flex;
    align-items: center;
    justify-content: center;
    position: relative;
}
.task.open::after, .task.active::after {
    content: "";
    position: absolute;
    left: 4px;
    right: 4px;
    bottom: 0;
    height: 2px;
    background: #76b9ed;
}
.task.active {
    background: #444;
}
.tray {
    margin-left: auto;
    display: flex;
    align-items: center;
    gap: 7px;
    padding-right: 24px;
}
.tray-lang, .tray-clock {
    display: flex;
    flex-direction: column;
    align-items: center;
    font-size: 11.500px;
    line-height: 17px;
    letter-spacing: -0.2px;
}
.tray-lang {
    margin-left: 1px;
}
.tray-clock {
    width: 62px;
    margin: 0 12px 0 1px;
}
```

FILE: sheet.js
```js
const colNames = ['G', 'H', 'I', 'J', 'K', 'L', 'M', 'N', 'O', 'P', 'Q', 'R', 'S', 'T', 'U', 'V', 'W', 'X', 'Y', 'Z', 'AA', 'AB', 'AC', 'AD', ''];
const colWidths = { G: 106, H: 63, I: 63, J: 63, K: 155, '': 25 };
const filter = '<span class="filter"></span>';

const rows = [
    { label: '1', height: 68, tall: true },
    { label: '2', height: 25 },
    { label: '3', height: 24, active: true },
    { label: '4', height: 24 },
    { label: '5', height: 24 },
    { label: '6', height: 24 },
    { label: '7', height: 24 }
];
for (let n = 497; n <= 520; n++) rows.push({ label: String(n), height: 21 });
// the next row only shows a sliver, too little for its number
rows.push({ label: '', height: 21 });

// only the cells that differ from an empty grid cell
const cells = {
    G1: { cls: 'head small-head br bb', html: 'ULTIMO DIA<br>DE FÉRIAS' + filter },
    H1: { cls: 'head br bb', html: '<span class="spell">QTD</span><br><span class="spell">E</span><br>DIAS' + filter },
    I1: { cls: 'head br bb', html: 'ABO<br>NO<br>(S/N)' + filter },
    J1: { cls: 'head br bb', html: '13º<br>(S/N)' + filter },
    K1: { cls: 'bb', html: filter },
    G2: { cls: 'lime br bb' }, H2: { cls: 'lime br bb' }, I2: { cls: 'lime br bb' }, J2: { cls: 'lime br bb' }, K2: { cls: 'lime br bb' },
    G3: { cls: 'sel br bb', html: '29/12/99<span class="handle"></span>' },
    H3: { cls: 'br bb' }, I3: { cls: 'br bb' }, J3: { cls: 'br bb' },
    K3: { cls: 'red br bb', html: 'ED. <span class="spell">FISICA</span>' },
    G4: { cls: 'br bb' }, H4: { cls: 'br bb' }, I4: { cls: 'br bb' }, J4: { cls: 'br bb' },
    G5: { cls: 'br bb', html: '29/12/99' }, H5: { cls: 'br bb' }, I5: { cls: 'br nb' }, J5: { cls: 'br nb' },
    G6: { cls: 'br bb', html: '29/12/99' }, H6: { cls: 'br bb' }, I6: { cls: 'br nb' }, J6: { cls: 'br nb' },
    G7: { cls: 'br bb', html: '29/12/99' }, H7: { cls: 'br bb' }, I7: { cls: 'br bb' }, J7: { cls: 'br bb' }
};

function cellClass(col, row) {
    const key = col + row.label;
    if (cells[key]) return cells[key].cls;
    if (colNames.indexOf(col) < 5) return '';
    if (row.label === '1') return 'no-line';
    if (row.label === '2') return 'no-grid';
    return '';
}

function renderGrid() {
    const colTags = colNames.map(c => `<col style="width:${colWidths[c] || 70}px">`).join('');
    const head = colNames.map(c => `<th class="${c === 'G' ? 'active' : ''}${c === '' ? 'blank-head' : ''}">${c}</th>`).join('');
    const body = rows.map(row => {
        const tds = colNames.map(col => {
            const cell = cells[col + row.label];
            return `<td class="${cellClass(col, row)}">${cell && cell.html ? cell.html : ''}</td>`;
        }).join('');
        return `<tr class="${row.tall ? 'tall' : ''}" style="height:${row.height}px"><th class="row-head${row.active ? ' active' : ''}">${row.label}</th>${tds}</tr>`;
    }).join('');
    document.getElementById('grid').innerHTML = `<colgroup><col style="width:35px">${colTags}</colgroup><tr><th></th>${head}</tr>${body}`;
}

renderGrid();
```
